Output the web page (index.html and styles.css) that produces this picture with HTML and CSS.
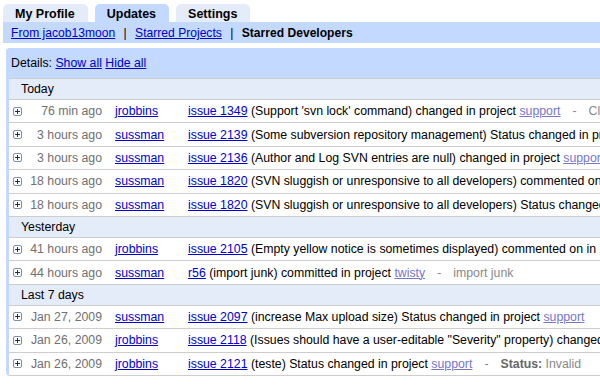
FILE: index.html
```
<!DOCTYPE html>
<html lang="en">
<head>
    <meta charset="UTF-8">
    <title>Updates - Starred Developers</title>
    <link rel="stylesheet" href="styles.css">
</head>
<body>
    <div class="page">
        <div class="tabs">
            <a class="tab" href="#">My Profile</a>
            <a class="tab active" href="#">Updates</a>
            <a class="tab" href="#">Settings</a>
        </div>

        <div class="subnav">
            <a href="#">From jacob13moon</a>
            <span class="sep">|</span>
            <a href="#">Starred Projects</a>
            <span class="sep">|</span>
            <b>Starred Developers</b>
        </div>

        <div class="panel">
            <div class="details">
                Details: <a href="#">Show all</a> <a href="#">Hide all</a>
            </div>

            <table class="updates">
                <colgroup>
                    <col class="col-icon">
                    <col class="col-time">
                    <col class="col-user">
                    <col>
                </colgroup>

                <tr class="group"><td colspan="4">Today</td></tr>
                <tr>
                    <td class="icon"><svg width="9" height="9" viewBox="0 0 9 9"><rect x="0.5" y="0.5" width="8" height="8" rx="1.5" fill="#fff" stroke="#7d8fb3"/><path d="M2 4.5h5M4.5 2v5" stroke="#1f2a55" stroke-width="1"/></svg></td>
                    <td class="time">76 min ago</td>
                    <td class="user"><a href="#">jrobbins</a></td>
                    <td class="desc"><a href="#">issue 1349</a> (Support 'svn lock' command) changed in project <a class="visited" href="#">support</a><span class="dash">-</span><span class="muted">Closed</span></td>
                </tr>
                <tr>
                    <td class="icon"><svg width="9" height="9" viewBox="0 0 9 9"><rect x="0.5" y="0.5" width="8" height="8" rx="1.5" fill="#fff" stroke="#7d8fb3"/><path d="M2 4.5h5M4.5 2v5" stroke="#1f2a55" stroke-width="1"/></svg></td>
                    <td class="time">3 hours ago</td>
                    <td class="user"><a href="#">sussman</a></td>
                    <td class="desc"><a href="#">issue 2139</a> (Some subversion repository management) Status changed in project <a class="visited" href="#">support</a></td>
                </tr>
                <tr>
                    <td class="icon"><svg width="9" height="9" viewBox="0 0 9 9"><rect x="0.5" y="0.5" width="8" height="8" rx="1.5" fill="#fff" stroke="#7d8fb3"/><path d="M2 4.5h5M4.5 2v5" stroke="#1f2a55" stroke-width="1"/></svg></td>
                    <td class="time">3 hours ago</td>
                    <td class="user"><a href="#">sussman</a></td>
                    <td class="desc"><a href="#">issue 2136</a> (Author and Log SVN entries are null) changed in project <a class="visited" href="#">support</a></td>
                </tr>
                <tr>
                    <td class="icon"><svg width="9" height="9" viewBox="0 0 9 9"><rect x="0.5" y="0.5" width="8" height="8" rx="1.5" fill="#fff" stroke="#7d8fb3"/><path d="M2 4.5h5M4.5 2v5" stroke="#1f2a55" stroke-width="1"/></svg></td>
                    <td class="time">18 hours ago</td>
                    <td class="user"><a href="#">sussman</a></td>
                    <td class="desc"><a href="#">issue 1820</a> (SVN sluggish or unresponsive to all developers) commented on in project <a class="visited" href="#">support</a></td>
                </tr>
                <tr>
                    <td class="icon"><svg width="9" height="9" viewBox="0 0 9 9"><rect x="0.5" y="0.5" width="8" height="8" rx="1.5" fill="#fff" stroke="#7d8fb3"/><path d="M2 4.5h5M4.5 2v5" stroke="#1f2a55" stroke-width="1"/></svg></td>
                    <td class="time">18 hours ago</td>
                    <td class="user"><a href="#">sussman</a></td>
                    <td class="desc"><a href="#">issue 1820</a> (SVN sluggish or unresponsive to all developers) Status changed in project <a class="visited" href="#">support</a></td>
                </tr>

                <tr class="group"><td colspan="4">Yesterday</td></tr>
                <tr>
                    <td class="icon"><svg width="9" height="9" viewBox="0 0 9 9"><rect x="0.5" y="0.5" width="8" height="8" rx="1.5" fill="#fff" stroke="#7d8fb3"/><path d="M2 4.5h5M4.5 2v5" stroke="#1f2a55" stroke-width="1"/></svg></td>
                    <td class="time">41 hours ago</td>
                    <td class="user"><a href="#">jrobbins</a></td>
                    <td class="desc"><a href="#">issue 2105</a> (Empty yellow notice is sometimes displayed) commented on in project <a class="visited" href="#">support</a></td>
                </tr>
                <tr>
                    <td class="icon"><svg width="9" height="9" viewBox="0 0 9 9"><rect x="0.5" y="0.5" width="8" height="8" rx="1.5" fill="#fff" stroke="#7d8fb3"/><path d="M2 4.5h5M4.5 2v5" stroke="#1f2a55" stroke-width="1"/></svg></td>
                    <td class="time">44 hours ago</td>
                    <td class="user"><a href="#">sussman</a></td>
                    <td class="desc"><a href="#">r56</a> (import junk) committed in project <a class="visited" href="#">twisty</a><span class="dash">-</span><span class="muted">import junk</span></td>
                </tr>

                <tr class="group"><td colspan="4">Last 7 days</td></tr>
                <tr>
                    <td class="icon"><svg width="9" height="9" viewBox="0 0 9 9"><rect x="0.5" y="0.5" width="8" height="8" rx="1.5" fill="#fff" stroke="#7d8fb3"/><path d="M2 4.5h5M4.5 2v5" stroke="#1f2a55" stroke-width="1"/></svg></td>
                    <td class="time">Jan 27, 2009</td>
                    <td class="user"><a href="#">sussman</a></td>
                    <td class="desc"><a href="#">issue 2097</a> (increase Max upload size) Status changed in project <a class="visited" href="#">support</a></td>
                </tr>
                <tr>
                    <td class="icon"><svg width="9" height="9" viewBox="0 0 9 9"><rect x="0.5" y="0.5" width="8" height="8" rx="1.5" fill="#fff" stroke="#7d8fb3"/><path d="M2 4.5h5M4.5 2v5" stroke="#1f2a55" stroke-width="1"/></svg></td>
                    <td class="time">Jan 26, 2009</td>
                    <td class="user"><a href="#">jrobbins</a></td>
                    <td class="desc"><a href="#">issue 2118</a> (Issues should have a user-editable "Severity" property) changed in project <a class="visited" href="#">support</a></td>
                </tr>
                <tr>
                    <td class="icon"><svg width="9" height="9" viewBox="0 0 9 9"><rect x="0.5" y="0.5" width="8" height="8" rx="1.5" fill="#fff" stroke="#7d8fb3"/><path d="M2 4.5h5M4.5 2v5" stroke="#1f2a55" stroke-width="1"/></svg></td>
                    <td class="time">Jan 26, 2009</td>
                    <td class="user"><a href="#">jrobbins</a></td>
                    <td class="desc"><a href="#">issue 2121</a> (teste) Status changed in project <a class="visited" href="#">support</a><span class="dash">-</span><b class="muted-label">Status:</b> <span class="muted">Invalid</span></td>
                </tr>
            </table>
        </div>
    </div>
</body>
</html>
```

FILE: styles.css
```
* {
    margin: 0;
    padding: 0;
    box-sizing: border-box;
}

body {
    font-family: "Liberation Sans", Arial, sans-serif;
    font-size: 12.3px;
    color: #000;
    background: #fff;
    overflow: hidden;
}

a {
    color: #0000cc;
}

.page {
    padding: 4px 0 0 3px;
}

/* Tabs */
.tabs {
    display: flex;
    gap: 7px;
}

.tab {
    display: block;
    height: 18px;
    line-height: 21px;
    padding: 0 13px 0 12px;
    background: #e5ecf9;
    border-radius: 5px 5px 0 0;
    color: #000;
    font-size: 12.5px;
    font-weight: bold;
    text-decoration: none;
}

.tab.active {
    background: #c3d9ff;
}

.subnav {
    height: 21px;
    line-height: 22px;
    padding-left: 8px;
    background: #c3d9ff;
    font-size: 12.1px;
}

.subnav .sep {
    margin: 0 5px;
}

/* Updates panel */
.panel {
    width: 820px;
    margin: 5px 0 0 3px;
    border-left: 3px solid #c3d9ff;
    border-radius: 4px 0 0 4px;
}

.details {
    height: 30px;
    line-height: 31px;
    margin-left: -3px;
    padding-left: 5px;
    background: #c3d9ff;
    border-radius: 4px 0 0 0;
}

.updates {
    width: 100%;
    border-collapse: collapse;
    table-layout: fixed;
}

.col-icon {
    width: 19px;
}

.col-time {
    width: 80px;
}

.col-user {
    width: 74px;
}

.updates td {
    height: 23.4px;
    border-top: 1px solid #cdcdcd;
    white-space: nowrap;
    overflow: hidden;
    vertical-align: middle;
}

.updates tr:last-child td {
    border-bottom: 1px solid #cdcdcd;
}

.updates .group td {
    height: 21px;
    padding-left: 12px;
    background: #e5ecf9;
}

.icon {
    padding-left: 4px;
    line-height: 0;
}

.time {
    text-align: right;
    padding-right: 6px;
    color: #707070;
}

.user {
    padding-left: 7px;
}

.desc {
    padding-left: 6px;
}

.desc a.visited {
    color: #7676cc;
}

.dash {
    color: #888;
    margin: 0 12px;
}

.muted {
    color: #888;
}

.muted-label {
    color: #666;
}
```
